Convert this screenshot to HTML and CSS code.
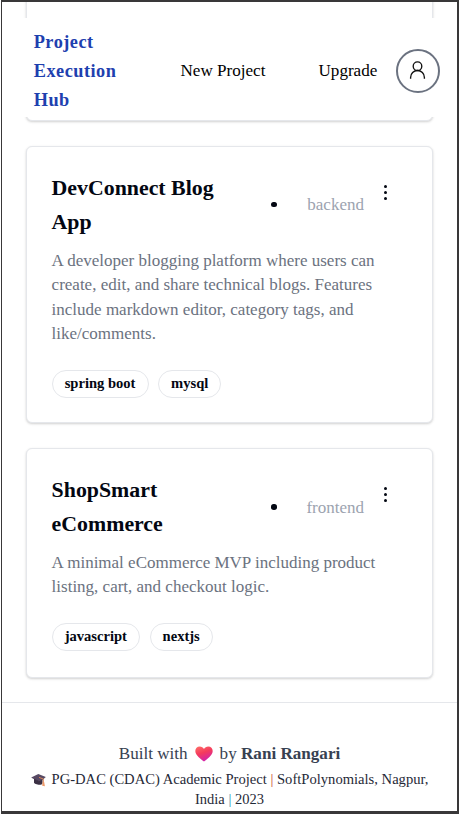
FILE: index.html
```html
<!DOCTYPE html>
<html lang="en">
<head>
<meta charset="utf-8">
<title>Project Execution Hub</title>
<link rel="stylesheet" href="styles.css">
</head>
<body>
<div class="window">
  <header class="navbar">
    <a class="brand">Project<br>Execution<br>Hub</a>
    <a class="nav-new">New Project</a>
    <a class="nav-upgrade">Upgrade</a>
    <span class="avatar">
      <svg width="17" height="19" viewBox="0 0 17 19" fill="none" stroke="#111" stroke-width="1.35"><circle cx="8.5" cy="5.2" r="4.3"/><path d="M1.6 17.8v-1.4a6.9 6.9 0 0 1 13.8 0v1.4"/></svg>
    </span>
  </header>
  <main class="projects">
    <article class="card card-previous"></article>
    <article class="card">
      <div class="card-head">
        <h2>DevConnect Blog<br>App</h2>
        <i class="dot"></i>
        <span class="category">backend</span>
        <svg class="more" width="5" height="17" viewBox="0 0 5 17" fill="#030712"><circle cx="2.5" cy="2.5" r="1.5"/><circle cx="2.5" cy="8.5" r="1.5"/><circle cx="2.5" cy="14.5" r="1.5"/></svg>
      </div>
      <p class="description">A developer blogging platform where users can<br>create, edit, and share technical blogs. Features<br>include markdown editor, category tags, and<br>like/comments.</p>
      <div class="tags"><span class="tag">spring boot</span><span class="tag">mysql</span></div>
    </article>
    <article class="card card-shop">
      <div class="card-head">
        <h2>ShopSmart<br>eCommerce</h2>
        <i class="dot"></i>
        <span class="category">frontend</span>
        <svg class="more" width="5" height="17" viewBox="0 0 5 17" fill="#030712"><circle cx="2.5" cy="2.5" r="1.5"/><circle cx="2.5" cy="8.5" r="1.5"/><circle cx="2.5" cy="14.5" r="1.5"/></svg>
      </div>
      <p class="description">A minimal eCommerce MVP including product<br>listing, cart, and checkout logic.</p>
      <div class="tags"><span class="tag">javascript</span><span class="tag">nextjs</span></div>
    </article>
  </main>
  <footer class="footer">
    <p class="credit"><span>Built with</span>
      <svg class="heart" width="18" height="16" viewBox="0 0 18 16"><defs><linearGradient id="h" x1="0" y1="0" x2=".4" y2="1"><stop offset="0" stop-color="#ff7068"/><stop offset=".5" stop-color="#f43b5c"/><stop offset="1" stop-color="#d423a8"/></linearGradient></defs><path fill="url(#h)" d="M9 15.6C6.600 13.800.3 9.700.3 5.100.3 2.300 2.200.5 4.700.5 6.600.5 8.200 1.500 9 3 9.800 1.500 11.400.5 13.300.5c2.500 0 4.400 1.800 4.400 4.600 0 4.600-6.300 8.700-8.700 10.500z"/></svg>
      <span>by <strong>Rani Rangari</strong></span></p>
    <p class="course">
      <svg class="cap" width="15" height="14" viewBox="0 0 15 14"><path fill="#3b3044" d="M3 5v4.500c0 2 8 3.500 8.500.8V5z"/><path fill="#584a64" d="M.2 4.600 7.300 1l7.500 3-6.300 5z"/><path fill="#352a3d" d="m.2 4.600 8.300 3.600L14.800 4l-6.300 5z"/><path d="M8 4.400 12.300 6v4" fill="none" stroke="#dc8758"/><path fill="#ee9a69" d="m11.600 9 1.500 0 .8 4.200-2.700-.5z"/></svg>
      <span>PG-DAC (CDAC) Academic Project <b class="bar bar-warm">|</b> SoftPolynomials, Nagpur,</span></p>
    <p class="place">India <b class="bar bar-cool">|</b> 2023</p>
  </footer>
</div>
</body>
</html>
```

FILE: styles.css
```css
* { box-sizing: border-box; }
body { margin: 0; background: #fff; font-family: "Liberation Serif", "Times New Roman", serif; color: #030712; overflow: hidden; }
h2, p { margin: 0; }
.window { position: relative; width: 458px; height: 814px; margin-left: 1px; border: solid #393839; border-width: 2px 2px 3px 1px; overflow: hidden; }
.navbar { position: absolute; top: 16px; left: 0; right: 0; z-index: 2; height: 99px; padding: 6px 17px 0 31.7px; display: flex; align-items: center; background: #fff; font-size: 17.1px; color: #000; white-space: nowrap; }
.brand { width: 146.8px; padding-top: 1px; font-size: 18.3px; line-height: 29px; font-weight: 700; letter-spacing: .5px; color: #1e40af; }
.nav-new { width: 138px; padding-top: 6px; margin-top: -6px; }
.nav-upgrade { width: 77.5px; padding-top: 6px; margin-top: -6px; }
.avatar { flex: none; width: 44px; height: 44px; border: 2px solid #6b7280; border-radius: 50%; display: flex; align-items: center; justify-content: center; }
.projects { display: flex; flex-direction: column; gap: 25px; padding: 0 24px; margin-top: -10px; }
.card { height: 277px; padding: 24px 24px 24px 24.6px; border: 1px solid #e5e7eb; border-radius: 6px; background: #fff; box-shadow: 0 1px 3px rgba(0,0,0,.12), 0 1px 2px rgba(0,0,0,.07); }
.card-previous { height: 129px; }
.card-shop { height: 230px; margin-bottom: -1px; }
.card-shop .tags { margin-top: 23.4px; }
.card-head { display: flex; align-items: center; height: 68px; }
h2 { width: 219.8px; font-size: 21.85px; line-height: 34px; font-weight: 700; white-space: nowrap; }
.dot { width: 5.4px; height: 5.4px; margin-top: -1.5px; border-radius: 50%; background: #030712; }
.category { width: 87.2px; text-align: right; font-size: 17px; color: #9ca3af; }
.card-shop .category { padding-top: 2px; }
.card-shop .dot { margin-top: 0; }
.more { margin: -26px 0 0 19px; }
.description { margin-top: 10px; font-size: 17px; line-height: 24.35px; color: #6b7280; white-space: nowrap; }
.tags { display: flex; gap: 9.5px; margin-top: 24px; }
.tag { height: 28px; padding: 0 12.1px; border: 1px solid #e5e7eb; border-radius: 14px; font-size: 14.55px; line-height: 25px; font-weight: 700; white-space: nowrap; }
.footer { margin-top: 25px; padding-top: 39px; border-top: 1px solid #e5e7eb; text-align: center; white-space: nowrap; }
.credit { display: flex; justify-content: center; align-items: center; gap: 7px; height: 24px; font-size: 17.1px; color: #374151; }
.course { display: flex; align-items: center; justify-content: center; gap: 6px; margin-top: 4px; font-size: 14.6px; line-height: 19px; color: #1f2937; }
.place { font-size: 14.5px; line-height: 19px; padding-top: 1px; color: #1f2937; }
.bar { font-weight: 400; }
.bar-warm { color: #c8452c; }
.bar-cool { color: #1590b0; }
```
